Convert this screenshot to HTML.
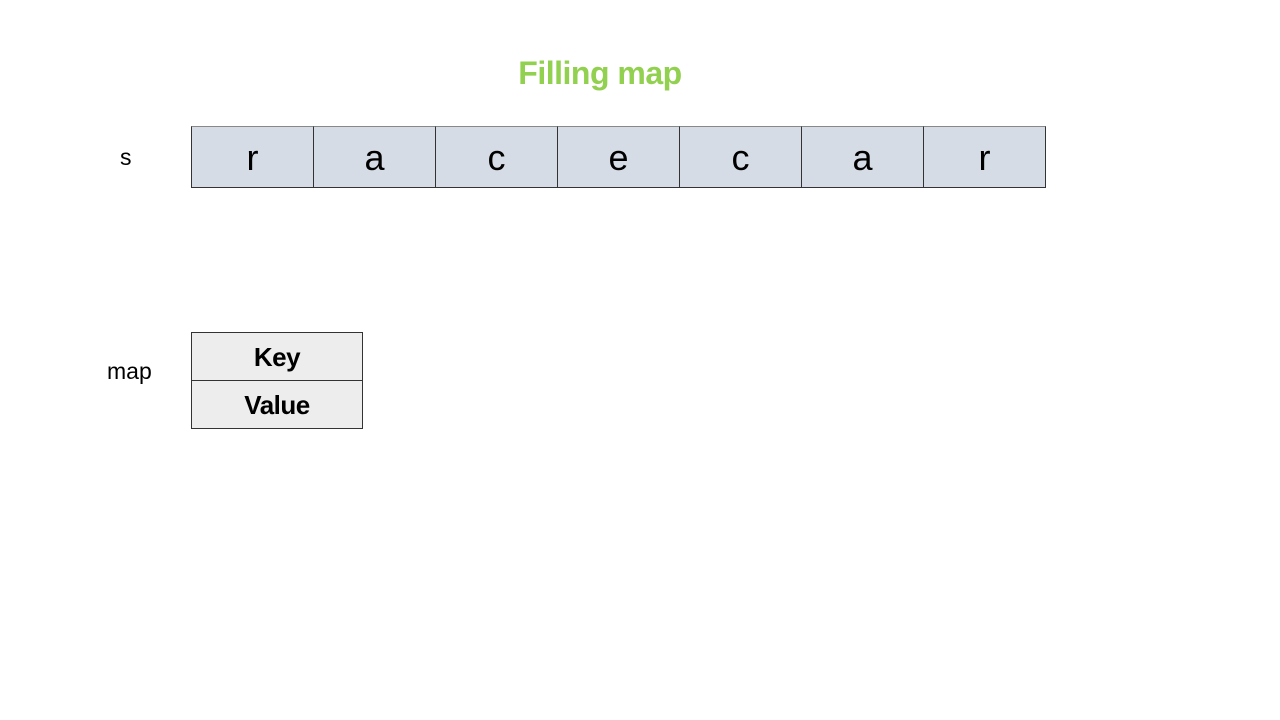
<!DOCTYPE html>
<html><head><style>
body{margin:0;width:1280px;height:720px;background:#fff;position:relative;font-family:"Liberation Sans",sans-serif;overflow:hidden}
.t{position:absolute;left:0;width:1200px;text-align:center;top:55px;color:#92d050;font-weight:bold;font-size:32px;letter-spacing:-0.5px}
.c{position:absolute;top:126px;height:62px;width:123px;background:#d6dce5;border:1px solid #333;border-top-color:#888;box-sizing:border-box;font-size:36px;line-height:62px;text-align:center;color:#000}
.l{position:absolute;font-size:23px;color:#000}
.m{position:absolute;left:191px;width:172px;height:49px;background:#ededed;border:1px solid #333;box-sizing:border-box;font-weight:bold;font-size:26px;line-height:49px;text-align:center;letter-spacing:-0.5px}
</style></head><body>
<div class="t">Filling map</div>
<div class="l" style="left:120px;top:144px">s</div>
<div class="c" style="left:191px">r</div>
<div class="c" style="left:313px">a</div>
<div class="c" style="left:435px">c</div>
<div class="c" style="left:557px">e</div>
<div class="c" style="left:679px">c</div>
<div class="c" style="left:801px">a</div>
<div class="c" style="left:923px">r</div>
<div class="l" style="left:107px;top:358px">map</div>
<div class="m" style="top:332px">Key</div>
<div class="m" style="top:380px">Value</div>
</body></html>
